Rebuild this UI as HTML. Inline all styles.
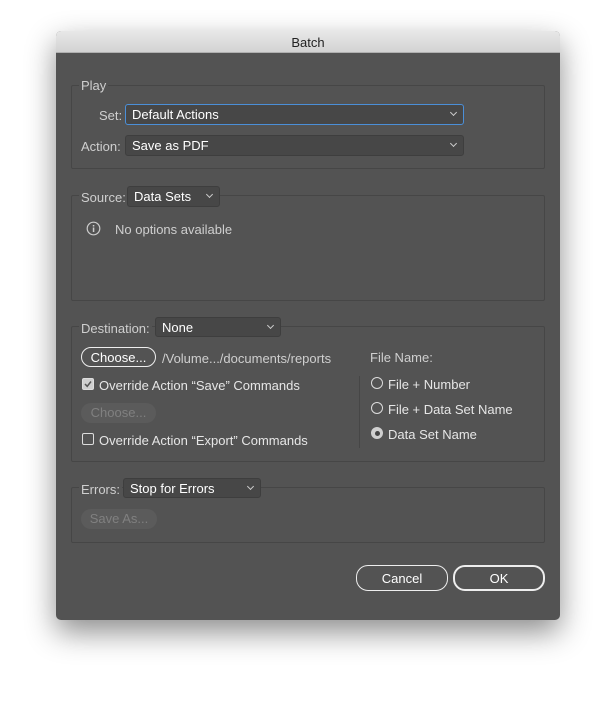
<!DOCTYPE html>
<html><head><style>
*{box-sizing:border-box;margin:0;padding:0}
body{width:616px;height:701px;background:#fff;position:relative;overflow:hidden;font-family:"Liberation Sans",sans-serif;font-size:13px;color:#e6e6e6}
.dlg{position:absolute;left:56px;top:31px;width:504px;height:589px;background:#535353;border-radius:5px;box-shadow:0 12px 30px rgba(0,0,0,.45);overflow:hidden}
.tb{position:absolute;left:0;top:0;width:504px;height:22px;background:linear-gradient(#e8e8e8,#d3d3d3);border-bottom:1px solid #b0b0b0;color:#222;text-align:center;line-height:23px;font-size:13px}
.a{position:absolute}
.g{position:absolute;border:1px solid #464646;border-radius:2px}
.lbl{position:absolute;color:#cfcfcf;background:#535353;padding:0 2px;white-space:nowrap}
.sel{position:absolute;background:#474747;border:1px solid #3e3e3e;border-radius:3px;color:#fff;padding-left:6px;line-height:19px;white-space:nowrap}
.sel:after{content:"";position:absolute;right:7px;top:5px;width:4px;height:4px;border-right:1px solid #ccc;border-bottom:1px solid #ccc;transform:rotate(45deg)}
.btn{position:absolute;border:1.5px solid #eee;border-radius:12px;color:#fff;display:flex;align-items:center;justify-content:center}
.dis{position:absolute;background:#5b5b5b;border-radius:10px;text-align:center;color:#808080}
.t{position:absolute;white-space:nowrap}
.rb{position:absolute;width:12px;height:12px;border:1px solid #ddd;border-radius:50%}
.cb{position:absolute;width:12px;height:12px;border:1px solid #ddd;border-radius:2px}
</style></head><body>
<div class="dlg">
<div class="tb">Batch</div>
</div>
<div class="g" style="left:71px;top:85px;width:474px;height:84px"></div>
<div class="lbl" style="left:79px;top:78px">Play</div>
<div class="t" style="left:99px;top:108px;color:#cfcfcf">Set:</div>
<div class="sel" style="left:125px;top:104px;width:339px;height:21px;border-color:#4b8fd8">Default Actions</div>
<div class="t" style="left:81px;top:139px;color:#cfcfcf">Action:</div>
<div class="sel" style="left:125px;top:135px;width:339px;height:21px">Save as PDF</div>
<div class="g" style="left:71px;top:195px;width:474px;height:106px"></div>
<div class="lbl" style="left:79px;top:190px">Source:</div>
<div class="sel" style="left:127px;top:186px;width:93px;height:21px">Data Sets</div>
<svg class="a" style="left:86px;top:221px" width="15" height="15"><circle cx="7.5" cy="7.5" r="6.3" fill="none" stroke="#ccc" stroke-width="1.2"/><rect x="6.8" y="6.5" width="1.5" height="4.5" fill="#ccc"/><rect x="6.8" y="4" width="1.5" height="1.5" fill="#ccc"/></svg>
<div class="t" style="left:115px;top:222px;color:#cfcfcf">No options available</div>
<div class="g" style="left:71px;top:326px;width:474px;height:136px"></div>
<div class="lbl" style="left:79px;top:321px">Destination:</div>
<div class="sel" style="left:155px;top:317px;width:126px;height:20px">None</div>
<div class="btn" style="left:81px;top:347px;width:75px;height:20px">Choose...</div>
<div class="t" style="left:162px;top:351px;color:#cfcfcf">/Volume.../documents/reports</div>
<div class="cb" style="left:82px;top:378px;background:#cfcfcf"></div>
<svg class="a" style="left:83px;top:379px" width="10" height="10"><path d="M2 5 L4.2 7.3 L8 2.5" fill="none" stroke="#555" stroke-width="1.5"/></svg>
<div class="t" style="left:99px;top:378px">Override Action “Save” Commands</div>
<div class="dis" style="left:81px;top:403px;width:75px;height:20px;line-height:20px">Choose...</div>
<div class="cb" style="left:82px;top:433px"></div>
<div class="t" style="left:99px;top:433px">Override Action “Export” Commands</div>
<div class="a" style="left:359px;top:376px;width:1px;height:72px;background:#464646"></div>
<div class="t" style="left:370px;top:350px;color:#cfcfcf">File Name:</div>
<div class="rb" style="left:371px;top:377px"></div>
<div class="t" style="left:388px;top:377px">File + Number</div>
<div class="rb" style="left:371px;top:402px"></div>
<div class="t" style="left:388px;top:402px">File + Data Set Name</div>
<div class="rb" style="left:371px;top:427px;background:#cfcfcf;border-color:#cfcfcf"></div>
<div class="a" style="left:375px;top:431px;width:5px;height:5px;border-radius:50%;background:#444"></div>
<div class="t" style="left:388px;top:427px">Data Set Name</div>
<div class="g" style="left:71px;top:487px;width:474px;height:56px"></div>
<div class="lbl" style="left:79px;top:482px">Errors:</div>
<div class="sel" style="left:123px;top:478px;width:138px;height:20px">Stop for Errors</div>
<div class="dis" style="left:81px;top:509px;width:76px;height:20px;line-height:20px">Save As...</div>
<div class="btn" style="left:356px;top:565px;width:92px;height:26px">Cancel</div>
<div class="btn" style="left:453px;top:565px;width:92px;height:26px;border-width:2px">OK</div>
</body></html>
